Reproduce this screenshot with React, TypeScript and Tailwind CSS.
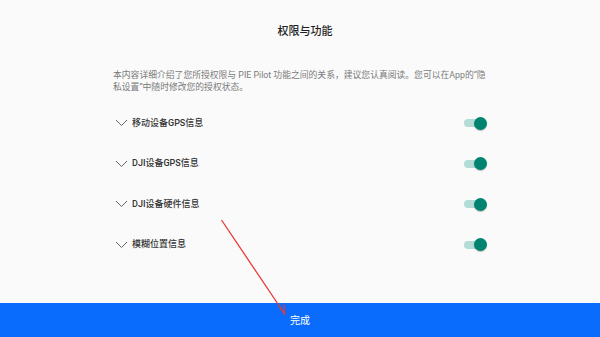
const items = ["移动设备GPS信息", "DJI设备GPS信息", "DJI设备硬件信息", "模糊位置信息"];

const Toggle = () => (
  <div className="relative w-[23px] h-[13px] flex items-center">
    <div className="w-[20px] h-[8px] rounded-full bg-[#b3dcd7]" />
    <div className="absolute right-0 top-0 w-[13px] h-[13px] rounded-full bg-[#00846f] shadow-[0_1px_1px_rgba(0,0,0,0.25)]" />
  </div>
);

const Chevron = () => (
  <svg width="13" height="8" viewBox="0 0 13 8" className="shrink-0">
    <polyline points="1,1 6.5,6.5 12,1" fill="none" stroke="#666" strokeWidth="1" />
  </svg>
);

export default function App() {
  return (
    <div
      className="relative w-[600px] h-[337px] bg-[#fafafa] flex flex-col overflow-hidden"
      style={{ fontFamily: "Roboto, 'Noto Sans CJK SC', sans-serif" }}
    >
      <div className="flex-1 w-[374px] mx-auto flex flex-col">
        <h1 className="pt-[24px] pl-[10px] h-[40px] text-center text-[11px] leading-[16px] font-medium text-[#1f1f1f]">
          权限与功能
        </h1>
        <p className="mt-[30px] text-[8.8px] leading-[11.5px] text-[#7a7a7a]">
          本内容详细介绍了您所授权限与 PIE Pilot 功能之间的关系，建议您认真阅读。您可以在App的“隐私设置”中随时修改您的授权状态。
        </p>
        <div className="mt-[10px] flex flex-col">
          {items.map((t) => (
            <div key={t} className="h-[40.5px] flex items-center">
              <div className="pl-[2px] pr-[4px]">
                <Chevron />
              </div>
              <span className="flex-1 text-[9px] font-medium text-[#333]">{t}</span>
              <Toggle />
            </div>
          ))}
        </div>
      </div>
      <button className="h-[34px] w-full bg-[#0a6cfd] text-white text-[10px] flex items-center justify-center">
        完成
      </button>
      <svg className="absolute inset-0 pointer-events-none" width="600" height="337">
        <line x1="221.5" y1="220" x2="284" y2="313" stroke="#e53935" strokeWidth="1.3" />
        <polyline points="279,306 284.5,314 284,304.5" fill="none" stroke="#e53935" strokeWidth="1.3" />
      </svg>
    </div>
  );
}
